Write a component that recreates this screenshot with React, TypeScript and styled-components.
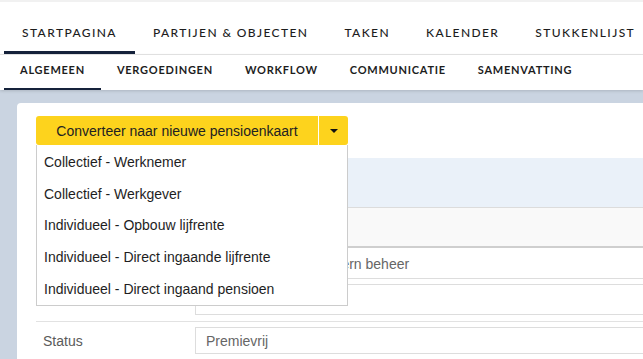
import React from "react";
import styled, { createGlobalStyle } from "styled-components";

const GlobalStyle = createGlobalStyle`
  html, body { margin: 0; padding: 0; }
  body {
    background: #cad4e1;
    overflow: hidden;
    font-family: "Liberation Sans", Arial, sans-serif;
  }
  * { box-sizing: border-box; }
`;

const Page = styled.div`
  width: 643px;
  height: 359px;
  overflow: hidden;
  display: flex;
  flex-direction: column;
`;

const TopStrip = styled.div`
  height: 2px;
  background: #f1f1f1;
`;

const MainNav = styled.nav`
  display: flex;
  background: #fff;
  padding-left: 4px;
  border-bottom: 1px solid #e6e6e6;
  white-space: nowrap;
`;

const MainTab = styled.div<{ $active?: boolean }>`
  padding: 24px 18px 11px;
  font-family: "Lato", "Open Sans", sans-serif;
  font-size: 12px;
  line-height: 14px;
  font-weight: 500;
  letter-spacing: 1.4px;
  color: #1d1d1d;
  border-bottom: 3px solid ${(p) => (p.$active ? "#15223b" : "transparent")};
`;

const SubNav = styled.nav`
  display: flex;
  background: #fff;
  padding-left: 4px;
  box-shadow: 0 1px 3px rgba(0, 0, 0, 0.15);
  position: relative;
  z-index: 1;
  white-space: nowrap;
`;

const SubTab = styled.div<{ $active?: boolean }>`
  padding: 8px 16px 11px;
  font-family: "Lato", "Open Sans", sans-serif;
  font-size: 11px;
  line-height: 14px;
  font-weight: 700;
  letter-spacing: 0.75px;
  color: #1d1d1d;
  border-bottom: 2px solid ${(p) => (p.$active ? "#15223b" : "transparent")};
`;

const Content = styled.main`
  flex: 1;
  padding: 13px 0 0 17px;
`;

const Card = styled.section`
  background: #fff;
  border-radius: 4px 0 0 0;
  height: 100%;
  padding: 13px 0 0 19px;
`;

const SplitButton = styled.div`
  position: relative;
  display: flex;
  width: 312px;
  height: 29px;
  gap: 1px;
  z-index: 2;
`;

const ButtonMain = styled.div`
  flex: 1;
  display: flex;
  align-items: center;
  justify-content: center;
  background: #fdd31d;
  border-radius: 3px 0 0 3px;
  font-size: 14px;
  color: #222;
`;

const ButtonCaret = styled.div`
  width: 29px;
  display: flex;
  align-items: center;
  justify-content: center;
  background: #fdd31d;
  border-radius: 0 3px 3px 0;
  &::after {
    content: "";
    border-left: 4px solid transparent;
    border-right: 4px solid transparent;
    border-top: 4px solid #111;
    margin-top: 1px;
  }
`;

const Menu = styled.ul`
  position: absolute;
  top: 29px;
  left: 0;
  width: 312px;
  margin: 0;
  padding: 1.5px 0 1px;
  list-style: none;
  background: #fff;
  border: 1px solid #cccccc;
  border-top: none;
`;

const MenuItem = styled.li`
  height: 31.6px;
  display: flex;
  align-items: center;
  padding-left: 7px;
  font-size: 14px;
  color: #1e1e1e;
  white-space: nowrap;
`;

const Panel = styled.div`
  margin-top: 13px;
`;

const PanelHeader = styled.div`
  height: 50px;
  background: #eaf1f9;
  border-bottom: 1px solid #dcdcdc;
`;

const TableHead = styled.div`
  height: 40px;
  background: #f9f9f9;
  border-bottom: 2px solid #cfcfcf;
`;

const FieldRow = styled.div<{ $divider?: boolean; $pad?: number }>`
  display: flex;
  align-items: center;
  padding-top: ${(p) => p.$pad ?? 0}px;
  border-top: ${(p) => (p.$divider ? "1px solid #e2e2e2" : "none")};
`;

const Label = styled.div`
  width: 159px;
  padding-left: 7px;
  font-size: 14px;
  color: #5a5a5a;
`;

const Input = styled.div<{ $h: number; $noTop?: boolean }>`
  flex: 1;
  height: ${(p) => p.$h}px;
  display: flex;
  align-items: center;
  padding-left: 10px;
  border: 1px solid #dddddd;
  border-top-color: ${(p) => (p.$noTop ? "transparent" : "#dddddd")};
  border-right: none;
  font-size: 14px;
  color: #666;
  white-space: nowrap;
  overflow: hidden;
`;

const Spacer = styled.div<{ $h: number }>`
  height: ${(p) => p.$h}px;
`;

const mainTabs = ["STARTPAGINA", "PARTIJEN & OBJECTEN", "TAKEN", "KALENDER", "STUKKENLIJST"];
const subTabs = ["ALGEMEEN", "VERGOEDINGEN", "WORKFLOW", "COMMUNICATIE", "SAMENVATTING"];
const options = [
  "Collectief - Werknemer",
  "Collectief - Werkgever",
  "Individueel - Opbouw lijfrente",
  "Individueel - Direct ingaande lijfrente",
  "Individueel - Direct ingaand pensioen",
];

export default function App() {
  return (
    <>
      <GlobalStyle />
      <Page>
        <TopStrip />
        <MainNav>
          {mainTabs.map((t, i) => (
            <MainTab key={t} $active={i === 0}>
              {t}
            </MainTab>
          ))}
        </MainNav>
        <SubNav>
          {subTabs.map((t, i) => (
            <SubTab key={t} $active={i === 0}>
              {t}
            </SubTab>
          ))}
        </SubNav>
        <Content>
          <Card>
            <SplitButton>
              <ButtonMain>Converteer naar nieuwe pensioenkaart</ButtonMain>
              <ButtonCaret />
              <Menu>
                {options.map((o) => (
                  <MenuItem key={o}>{o}</MenuItem>
                ))}
              </Menu>
            </SplitButton>
            <Panel>
              <PanelHeader />
              <TableHead />
              <FieldRow>
                <Label />
                <Input $h={31} $noTop>
                  Administratie door extern beheer
                </Input>
              </FieldRow>
              <Spacer $h={5} />
              <FieldRow>
                <Label />
                <Input $h={31} />
              </FieldRow>
              <Spacer $h={6} />
              <FieldRow $divider $pad={5}>
                <Label>Status</Label>
                <Input $h={27}>Premievrij</Input>
              </FieldRow>
            </Panel>
          </Card>
        </Content>
      </Page>
    </>
  );
}
